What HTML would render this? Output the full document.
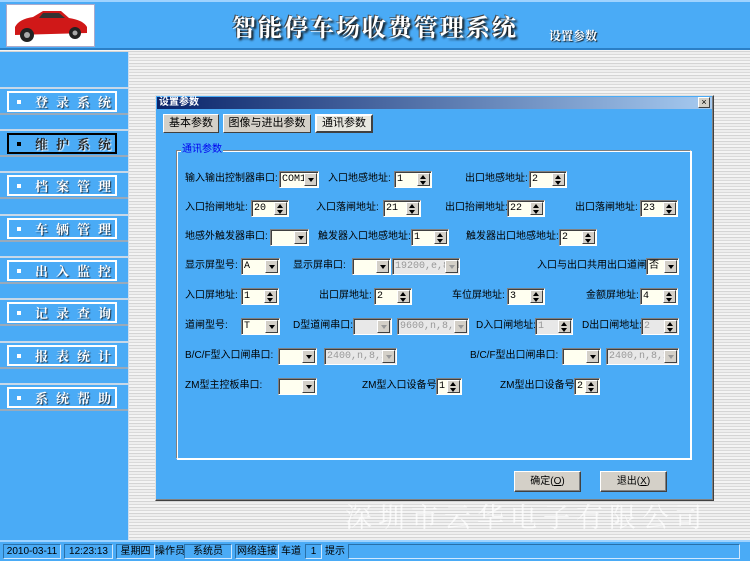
<!DOCTYPE html>
<html><head><meta charset="utf-8"><style>
*{margin:0;padding:0;box-sizing:border-box}
body{width:750px;height:561px;overflow:hidden;position:relative;font-family:"Liberation Sans","Noto Sans CJK SC",sans-serif;font-size:10px;
background:#ebebeb repeating-linear-gradient(0deg,#f4f4f4 0 2px,#dadada 2px 3px,#eeeeee 3px 5px,#d4d4d4 5px 6px)}
.a{position:absolute}
.lbl{position:absolute;font-size:10px;line-height:12px;color:#000;white-space:nowrap;font-family:"Liberation Sans","WenQuanYi Zen Hei",sans-serif}
.f{position:absolute;height:17px;background:#fffff0;border:1px solid;border-color:#808080 #fff #fff #808080;box-shadow:inset 1px 1px 0 #404040;font-size:10px;line-height:15px;padding-left:2px;font-family:"Liberation Mono",monospace;white-space:nowrap;overflow:hidden}
.f.d{background:#e8e8e8;color:#999}
.f .b{position:absolute;right:1px;top:1px;width:13px;height:13px;background:#d4d0c8;border:1px solid;border-color:#fff #404040 #404040 #fff}
.f .b:after{content:"";position:absolute;left:3px;top:4px;border:3px solid transparent;border-top:4px solid #000;border-bottom:0}
.f.d .b:after{border-top-color:#999}
.f .s:after{content:"";left:2px;top:1px;width:0;height:0;border:none;border-left:3px solid transparent;border-right:3px solid transparent;border-bottom:4px solid #000}
.f .s:before{content:"";position:absolute;left:2px;top:7px;border-left:3px solid transparent;border-right:3px solid transparent;border-top:4px solid #000}
.nav{position:absolute;left:0;width:128px;height:28px;background:#4aabf6;border-top:2px solid #c8d8e8;border-bottom:2px solid #9ab}
.nav div{position:absolute;left:7px;top:2px;width:110px;height:21px;border:2px solid #fff;color:#fff;font-family:"Noto Serif CJK SC",serif;font-weight:bold;font-size:13px;line-height:17px;letter-spacing:8px;padding-left:26px;white-space:nowrap;overflow:hidden;text-shadow:1px 1px 1px #234}
.nav div:before{content:"";position:absolute;left:8px;top:7px;width:4px;height:4px;background:#fff}
.nav.on div{border-color:#000;color:#222;text-shadow:1px 1px 1px #fff}
.nav.on div:before{background:#000}
.st{position:absolute;top:544px;height:15px;border:1px solid;border-color:#2a70a8 #cfe8ff #cfe8ff #2a70a8;font-size:10px;line-height:13px;text-align:center;color:#000}
.tx{position:absolute;top:545px;font-size:10px;line-height:13px}
.btn{position:absolute;top:471px;width:67px;height:21px;background:#d4d0c8;border:1px solid;border-color:#fff #404040 #404040 #fff;box-shadow:inset -1px -1px 0 #808080;text-align:center;font-size:10px;line-height:19px}
</style></head><body>
<div class="a" style="left:0;top:0;width:750px;height:50px;background:#4aabf6;border-top:2px solid #9fd3ff;border-bottom:2px solid #2b7fc6"></div>
<div class="a" style="left:6px;top:4px;width:89px;height:43px;background:#fff;border:1px solid #aac">
<svg width="87" height="41" viewBox="0 0 87 41"><path d="M8 22 Q12 14 26 12 L36 6 L54 6 L62 13 Q76 15 80 22 L80 28 L8 30 Z" fill="#d01818"/><path d="M36 8 L52 8 L58 13 L32 13 Z" fill="#333"/><circle cx="20" cy="30" r="7" fill="#222"/><circle cx="20" cy="30" r="3" fill="#aaa"/><circle cx="68" cy="28" r="6" fill="#222"/><circle cx="68" cy="28" r="2.5" fill="#aaa"/></svg></div>
<div class="a" style="left:232px;top:10px;font-size:24px;line-height:32px;color:#fff;font-weight:bold;letter-spacing:2px;white-space:nowrap;font-family:'Noto Serif CJK SC',serif;text-shadow:2px 2px 2px #111,-1px -1px 0 #444">智能停车场收费管理系统</div>
<div class="a" style="left:549px;top:27px;font-size:12px;color:#fff;font-weight:bold;font-family:'Noto Serif CJK SC',serif;text-shadow:1px 1px 1px #111">设置参数</div>
<div class="a" style="left:0;top:52px;width:129px;height:488px;background:#4aabf6;border-right:1px solid #cde"></div>
<div class="nav" style="top:87px"><div>登录系统</div></div>
<div class="nav on" style="top:129px"><div>维护系统</div></div>
<div class="nav" style="top:171px"><div>档案管理</div></div>
<div class="nav" style="top:214px"><div>车辆管理</div></div>
<div class="nav" style="top:256px"><div>出入监控</div></div>
<div class="nav" style="top:298px"><div>记录查询</div></div>
<div class="nav" style="top:341px"><div>报表统计</div></div>
<div class="nav" style="top:383px"><div>系统帮助</div></div>
<div class="a" style="left:345px;top:500px;font-size:27px;color:rgba(255,255,255,.75);font-family:'Noto Serif CJK SC',serif;letter-spacing:6px;line-height:32px;white-space:nowrap">深圳市云华电子有限公司</div>
<div class="a" style="left:155px;top:95px;width:559px;height:406px;background:#4aabf6;border:1px solid;border-color:#e0e0e0 #404040 #404040 #e0e0e0;box-shadow:inset -1px -1px 0 #808080"></div>
<div class="a" style="left:157px;top:97px;width:555px;height:12px;background:linear-gradient(90deg,#0a246a,#a6caf0);color:#fff;font-weight:bold;font-size:10px;line-height:12px;padding-left:2px">设置参数</div>
<div class="a" style="left:698px;top:97px;width:12px;height:11px;background:#d4d0c8;border:1px solid;border-color:#fff #404040 #404040 #fff;font-size:9px;line-height:9px;text-align:center">×</div>
<div class="a" style="left:163px;top:114px;width:56px;height:19px;background:#d4d0c8;border:1px solid;border-color:#fff #404040 #404040 #fff;font-size:11px;line-height:17px;text-align:center">基本参数</div>
<div class="a" style="left:223px;top:114px;width:88px;height:19px;background:#d4d0c8;border:1px solid;border-color:#fff #404040 #404040 #fff;font-size:11px;line-height:17px;text-align:center">图像与进出参数</div>
<div class="a" style="left:315px;top:114px;width:58px;height:19px;background:#e8e8e0;border:2px solid;border-color:#fff #404040 #404040 #fff;font-size:11px;line-height:15px;text-align:center">通讯参数</div>
<div class="a" style="left:176px;top:150px;width:515px;height:309px;border:1px solid;border-color:#808080 #fff #fff #808080;box-shadow:1px 1px 0 #fff,inset 1px 1px 0 #fff"></div>
<div class="a" style="left:181px;top:144px;background:#4aabf6;color:#0000ee;font-size:10px;line-height:12px;padding:0 1px">通讯参数</div>

<div class="lbl" style="left:185px;top:173px">输入输出控制器串口:</div><div class="f" style="left:279px;top:171px;width:40px">COM1<span class="b"></span></div>
<div class="lbl" style="left:328px;top:173px">入口地感地址:</div><div class="f" style="left:394px;top:171px;width:38px">1<span class="b s"></span></div>
<div class="lbl" style="left:465px;top:173px">出口地感地址:</div><div class="f" style="left:529px;top:171px;width:38px">2<span class="b s"></span></div>

<div class="lbl" style="left:185px;top:202px">入口抬闸地址:</div><div class="f" style="left:251px;top:200px;width:38px">20<span class="b s"></span></div>
<div class="lbl" style="left:316px;top:202px">入口落闸地址:</div><div class="f" style="left:383px;top:200px;width:38px">21<span class="b s"></span></div>
<div class="lbl" style="left:445px;top:202px">出口抬闸地址:</div><div class="f" style="left:507px;top:200px;width:38px">22<span class="b s"></span></div>
<div class="lbl" style="left:575px;top:202px">出口落闸地址:</div><div class="f" style="left:640px;top:200px;width:38px">23<span class="b s"></span></div>

<div class="lbl" style="left:185px;top:231px">地感外触发器串口:</div><div class="f" style="left:270px;top:229px;width:39px"><span class="b"></span></div>
<div class="lbl" style="left:318px;top:231px">触发器入口地感地址:</div><div class="f" style="left:411px;top:229px;width:38px">1<span class="b s"></span></div>
<div class="lbl" style="left:466px;top:231px">触发器出口地感地址:</div><div class="f" style="left:559px;top:229px;width:38px">2<span class="b s"></span></div>

<div class="lbl" style="left:185px;top:260px">显示屏型号:</div><div class="f" style="left:241px;top:258px;width:39px">A<span class="b"></span></div>
<div class="lbl" style="left:293px;top:260px">显示屏串口:</div><div class="f" style="left:352px;top:258px;width:39px"><span class="b"></span></div>
<div class="f d" style="left:392px;top:258px;width:68px">19200,e,8,1<span class="b"></span></div>
<div class="lbl" style="left:537px;top:260px">入口与出口共用出口道闸:</div><div class="f" style="left:646px;top:258px;width:33px">否<span class="b"></span></div>

<div class="lbl" style="left:185px;top:290px">入口屏地址:</div><div class="f" style="left:241px;top:288px;width:38px">1<span class="b s"></span></div>
<div class="lbl" style="left:319px;top:290px">出口屏地址:</div><div class="f" style="left:374px;top:288px;width:38px">2<span class="b s"></span></div>
<div class="lbl" style="left:452px;top:290px">车位屏地址:</div><div class="f" style="left:507px;top:288px;width:38px">3<span class="b s"></span></div>
<div class="lbl" style="left:586px;top:290px">金额屏地址:</div><div class="f" style="left:640px;top:288px;width:38px">4<span class="b s"></span></div>

<div class="lbl" style="left:185px;top:320px">道闸型号:</div><div class="f" style="left:241px;top:318px;width:39px">T<span class="b"></span></div>
<div class="lbl" style="left:293px;top:320px">D型道闸串口:</div><div class="f d" style="left:353px;top:318px;width:39px"><span class="b"></span></div>
<div class="f d" style="left:397px;top:318px;width:72px">9600,n,8,1<span class="b"></span></div>
<div class="lbl" style="left:476px;top:320px">D入口闸地址:</div><div class="f d" style="left:535px;top:318px;width:38px">1<span class="b s"></span></div>
<div class="lbl" style="left:582px;top:320px">D出口闸地址:</div><div class="f d" style="left:641px;top:318px;width:38px">2<span class="b s"></span></div>

<div class="lbl" style="left:185px;top:350px">B/C/F型入口闸串口:</div><div class="f" style="left:278px;top:348px;width:39px"><span class="b"></span></div>
<div class="f d" style="left:324px;top:348px;width:73px">2400,n,8,1<span class="b"></span></div>
<div class="lbl" style="left:470px;top:350px">B/C/F型出口闸串口:</div><div class="f" style="left:562px;top:348px;width:39px"><span class="b"></span></div>
<div class="f d" style="left:606px;top:348px;width:73px">2400,n,8,1<span class="b"></span></div>

<div class="lbl" style="left:185px;top:380px">ZM型主控板串口:</div><div class="f" style="left:278px;top:378px;width:39px"><span class="b"></span></div>
<div class="lbl" style="left:362px;top:380px">ZM型入口设备号:</div><div class="f" style="left:436px;top:378px;width:26px">1<span class="b s"></span></div>
<div class="lbl" style="left:500px;top:380px">ZM型出口设备号:</div><div class="f" style="left:574px;top:378px;width:26px">2<span class="b s"></span></div>

<div class="btn" style="left:514px">确定(<u>O</u>)</div>
<div class="btn" style="left:600px">退出(<u>X</u>)</div>

<div class="a" style="left:0;top:540px;width:750px;height:21px;background:#4aabf6;border-top:2px solid #9fd3ff"></div>
<div class="st" style="left:3px;width:58px">2010-03-11</div>
<div class="st" style="left:64px;width:49px">12:23:13</div>
<div class="st" style="left:116px;width:39px">星期四</div>
<div class="tx" style="left:155px">操作员</div>
<div class="st" style="left:184px;width:48px">系统员</div>
<div class="st" style="left:235px;width:44px">网络连接</div>
<div class="tx" style="left:281px">车道</div>
<div class="st" style="left:305px;width:17px">1</div>
<div class="tx" style="left:325px">提示</div>
<div class="st" style="left:348px;width:392px"></div>
</body></html>
